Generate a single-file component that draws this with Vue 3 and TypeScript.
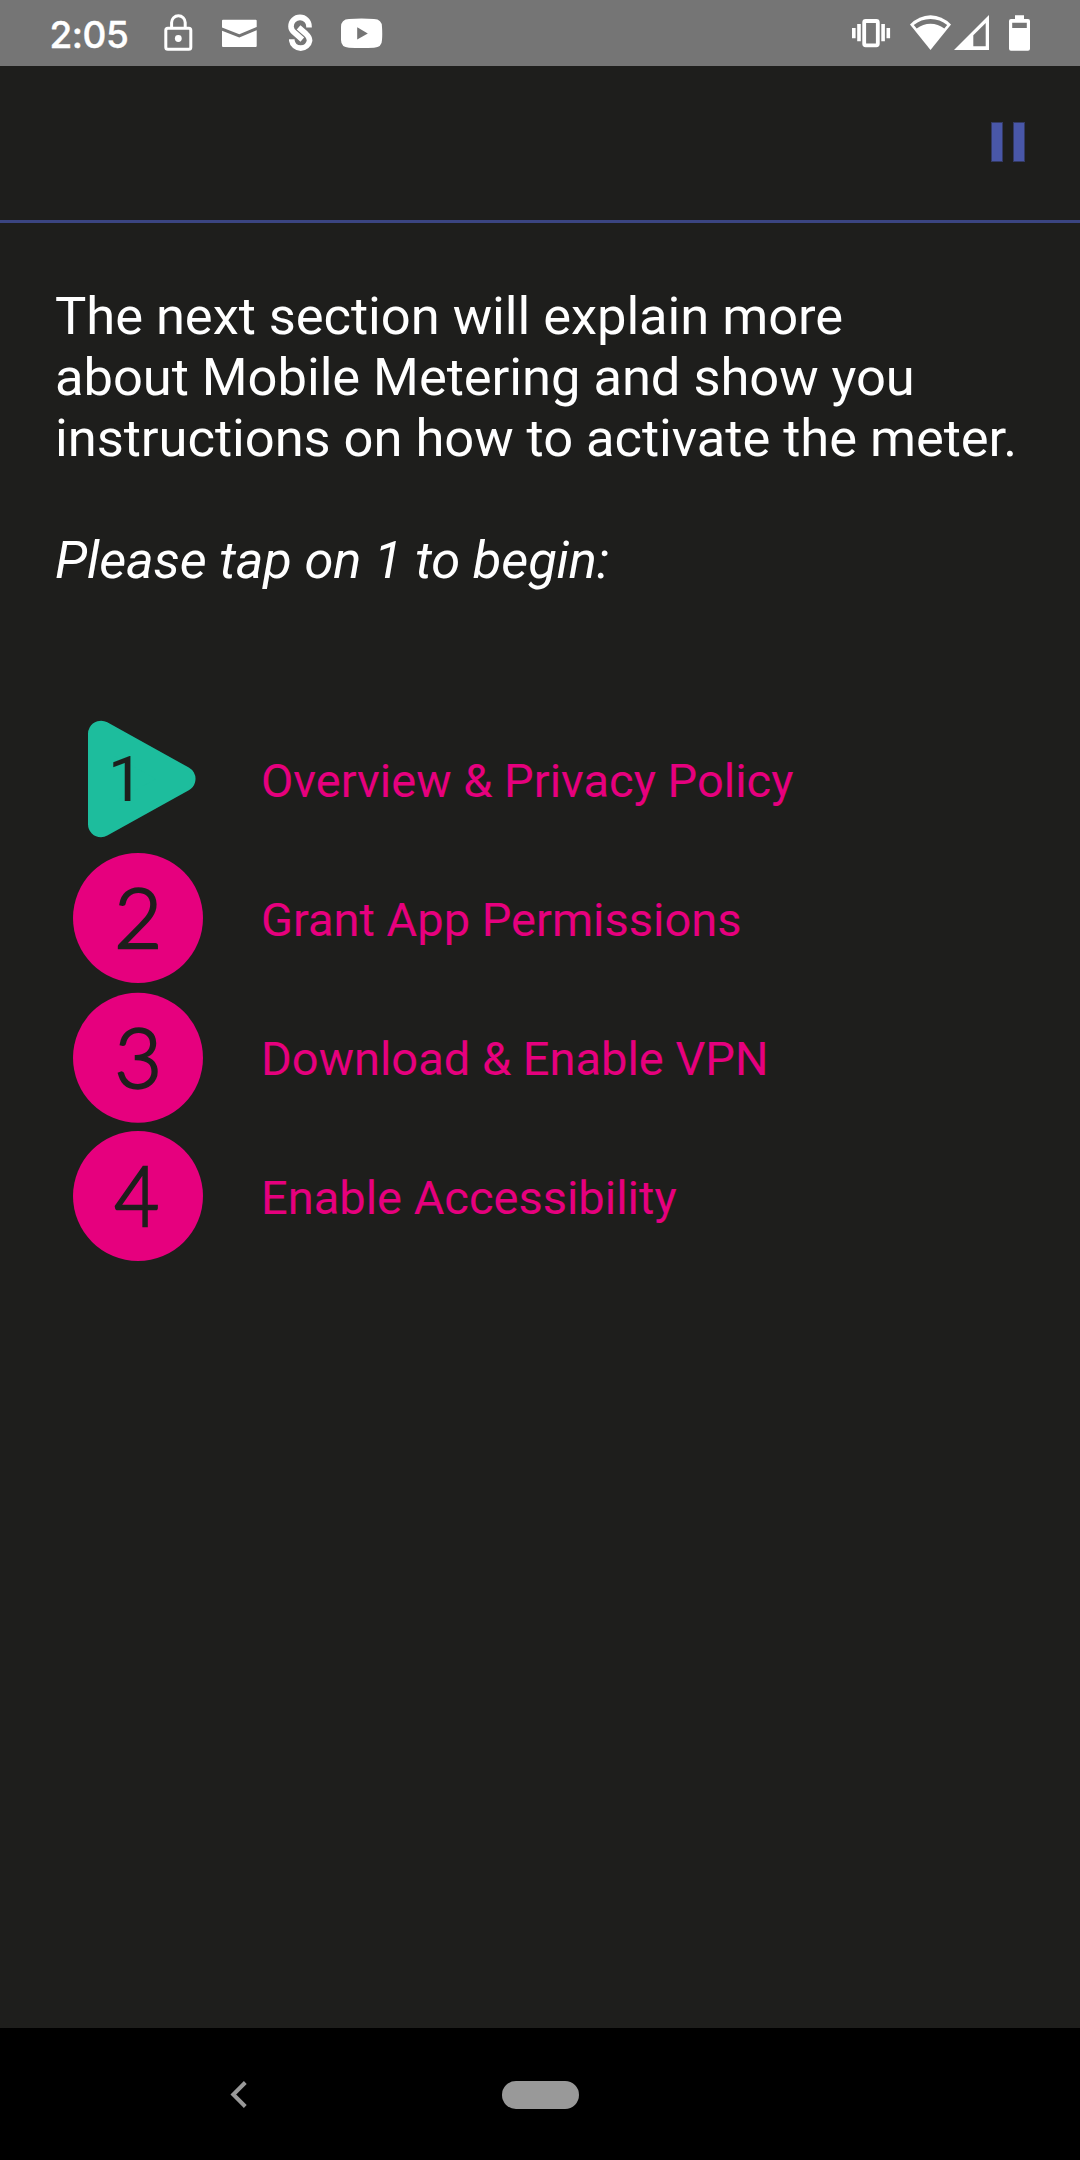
<script setup lang="ts">
interface Step {
  num: number
  label: string
  active?: boolean
  x?: number
  y?: number
  width?: number
}

const steps: Step[] = [
  { num: 1, label: 'Overview & Privacy Policy', active: true },
  { num: 2, label: 'Grant App Permissions', x: 65.3, y: 65, width: 48 },
  { num: 3, label: 'Download & Enable VPN', x: 65.3, y: 65.8, width: 47.5 },
  { num: 4, label: 'Enable Accessibility', x: 63.8, y: 65, width: 45 },
]
</script>

<template>
  <div class="screen">
    <header class="status">
      <span class="clock">2:05</span>
      <div class="notifications">
        <svg width="30" height="66" viewBox="163 0 30 66">
          <path d="M171.6 28v-5.5a6.8 6.8 0 0 1 13.6 0V28" fill="none" stroke="#fff" stroke-width="3" />
          <rect x="165.8" y="28.2" width="25" height="21" rx="2" fill="none" stroke="#fff" stroke-width="3" />
          <circle cx="178.3" cy="38.5" r="3.4" fill="#fff" />
        </svg>
        <svg width="35" height="66" viewBox="222 0 35 66" fill="#fff">
          <path d="M223 19.7h32.7a1 1 0 0 1 1 1v6.200l-17.400 7.400L222 27.500v-6.800a1 1 0 0 1 1-1z" />
          <path d="M222 30.800l17.300 6.600 17.400-7.200v15.800a1 1 0 0 1-1 1H223a1 1 0 0 1-1-1z" />
        </svg>
        <svg width="26" height="66" viewBox="287 0 26 66" fill="none" stroke="#fff" stroke-width="5.6">
          <path d="M309 27.6V26.4A9 9 0 0 0 291 26.4C291 30 293 31.500 295 33.200L302.300 39.600" />
          <path d="M291.800 39.300V40.500A9 9 0 0 0 309.600 40.500C309.600 37 307.500 35.200 305.800 33.700L298.600 27.300" />
        </svg>
        <svg width="42" height="66" viewBox="341 0 42 66">
          <path d="M349 19Q361.500 18.200 374 19Q382 19.300 382 27Q382.500 33.500 382 40Q382 47.200 374 47.700Q361.500 48.500 349 47.700Q341 47.200 341 40Q340.700 33.500 341 27Q341 19.300 349 19z" fill="#fff" />
          <path d="M357.200 27.300v12.200l10.600-6.100z" fill="#757575" />
        </svg>
      </div>
      <div class="system">
        <svg width="40" height="66" viewBox="851 0 40 66" fill="#fff">
          <path d="M852 28h3.600v10.300H852zM857.200 24h3.600v17.300h-3.600zM881.300 24h3.600v17.300h-3.600zM886.500 28h3.600v10.300h-3.600z" />
          <rect x="864.200" y="21" width="13.600" height="24.300" rx="1.500" fill="none" stroke="#fff" stroke-width="3.800" />
        </svg>
        <svg width="42" height="66" viewBox="910 0 42 66">
          <path d="M910 24.500Q919 15.500 930.500 15.300Q942 15.500 951 24.500L930.500 50z" fill="#fff" />
          <path d="M913.800 25Q921 19 930.500 18.900Q940 19 947.200 25L944.300 28.500Q938 23.800 930.500 23.800Q923 23.800 916.700 28.500z" fill="#757575" />
        </svg>
        <svg width="35" height="66" viewBox="954 0 35 66">
          <path d="M954 50L989 15v35z" fill="#fff" />
          <path d="M973.300 35.300L985.700 23v23.300h-12.400z" fill="#757575" />
        </svg>
        <svg width="21" height="66" viewBox="1009 0 21 66">
          <path d="M1015 15.300h9V19h4a2 2 0 0 1 2 2v27.700a2 2 0 0 1-2 2h-17a2 2 0 0 1-2-2V21a2 2 0 0 1 2-2h4z" fill="#fff" />
          <path d="M1012.200 22.700h14.600V28h-14.600z" fill="#757575" />
        </svg>
      </div>
    </header>

    <div class="toolbar">
      <div class="pause"><i></i><i></i></div>
    </div>

    <main class="content">
      <p class="intro">
        The next section will explain more<br />
        about Mobile Metering and show you<br />
        instructions on how to activate the meter.
      </p>
      <p class="prompt">Please tap on 1 to begin:</p>

      <ul class="steps">
        <li v-for="step in steps" :key="step.num" class="step">
          <svg class="badge" width="130" height="130" viewBox="0 0 130 130">
            <template v-if="step.active">
              <path
                d="M28 19.700V110.200L109.500 64.900z"
                fill="#1dbd9d"
                stroke="#1dbd9d"
                stroke-width="26"
                stroke-linejoin="round"
              />
              <text x="35" y="87.400" class="first">{{ step.num }}</text>
            </template>
            <template v-else>
              <circle cx="65" :cy="step.y" r="65" fill="#e6007e" />
              <text
                :x="step.x"
                :y="step.y! + 30"
                :textLength="step.width"
                lengthAdjust="spacingAndGlyphs"
                class="digit"
              >{{ step.num }}</text>
            </template>
          </svg>
          <span class="label">{{ step.label }}</span>
        </li>
      </ul>
    </main>

    <nav class="navbar">
      <svg width="18" height="30" viewBox="0 0 18 30">
        <path d="M15.300 3.500L3.300 15.500l12 12" fill="none" stroke="#999" stroke-width="4" />
      </svg>
      <div class="home"></div>
    </nav>
  </div>
</template>

<style>
body {
  margin: 0;
  background: #1e1e1c;
}
</style>

<style scoped>
.screen {
  width: 1080px;
  height: 2160px;
  display: flex;
  flex-direction: column;
  overflow: hidden;
  background: #1e1e1c;
  color: #fff;
  font-family: Roboto, "Liberation Sans", sans-serif;
}
svg {
  display: block;
  flex: none;
}
.status {
  height: 66px;
  flex: none;
  display: flex;
  background: #757575;
}
.clock {
  width: 113.5px;
  padding-left: 49.5px;
  line-height: 70px;
  font-family: Inter, sans-serif;
  font-size: 37px;
  font-weight: 500;
  letter-spacing: -0.5px;
  -webkit-text-stroke: 0.4px #fff;
}
.notifications {
  display: flex;
}
.notifications svg + svg {
  margin-left: 29px;
}
.notifications svg:nth-child(3) {
  margin-left: 30px;
}
.notifications svg:nth-child(4) {
  margin-left: 28px;
}
.system {
  display: flex;
  margin-left: auto;
  padding-right: 50px;
}
.system svg:nth-child(2) {
  margin-left: 19px;
}
.system svg:nth-child(3) {
  margin-left: 2px;
}
.system svg:nth-child(4) {
  margin-left: 20px;
}
.toolbar {
  height: 154px;
  flex: none;
  display: flex;
  justify-content: flex-end;
  border-bottom: 3px solid #3b4581;
}
.pause {
  display: flex;
  gap: 10px;
  padding: 56px 55px 0 0;
}
.pause i {
  width: 10px;
  height: 38px;
  border: 1px solid #333a63;
  background: #4957a8;
}
.content {
  flex: 1;
  padding: 63px 0 0 55px;
}
.intro,
.prompt {
  margin: 0;
  font-size: 52.5px;
  line-height: 61px;
  letter-spacing: -0.05px;
  white-space: nowrap;
}
.prompt {
  margin-top: 61px;
  font-style: italic;
  letter-spacing: -0.16px;
}
.steps {
  list-style: none;
  margin: 118px 0 0;
  padding: 0 0 0 18px;
}
.step {
  display: flex;
  align-items: center;
  height: 139.1px;
}
.badge {
  overflow: visible;
}
.label {
  margin-left: 58px;
  padding-top: 4px;
  font-size: 47px;
  line-height: 56px;
  color: #e6007e;
  white-space: nowrap;
}
.first {
  font-family: Roboto, sans-serif;
  font-size: 63px;
  fill: #1e1e1c;
}
.digit {
  font-family: Lato, sans-serif;
  font-size: 83px;
  font-weight: 300;
  text-anchor: middle;
  fill: #1e1e1c;
  stroke: #1e1e1c;
  stroke-width: 2.4px;
}
.navbar {
  height: 132px;
  flex: none;
  display: flex;
  align-items: center;
  padding-left: 230px;
  background: #000;
}
.home {
  width: 77px;
  height: 28px;
  margin: 1px 0 0 254px;
  border-radius: 14px;
  background: #999;
}
</style>
